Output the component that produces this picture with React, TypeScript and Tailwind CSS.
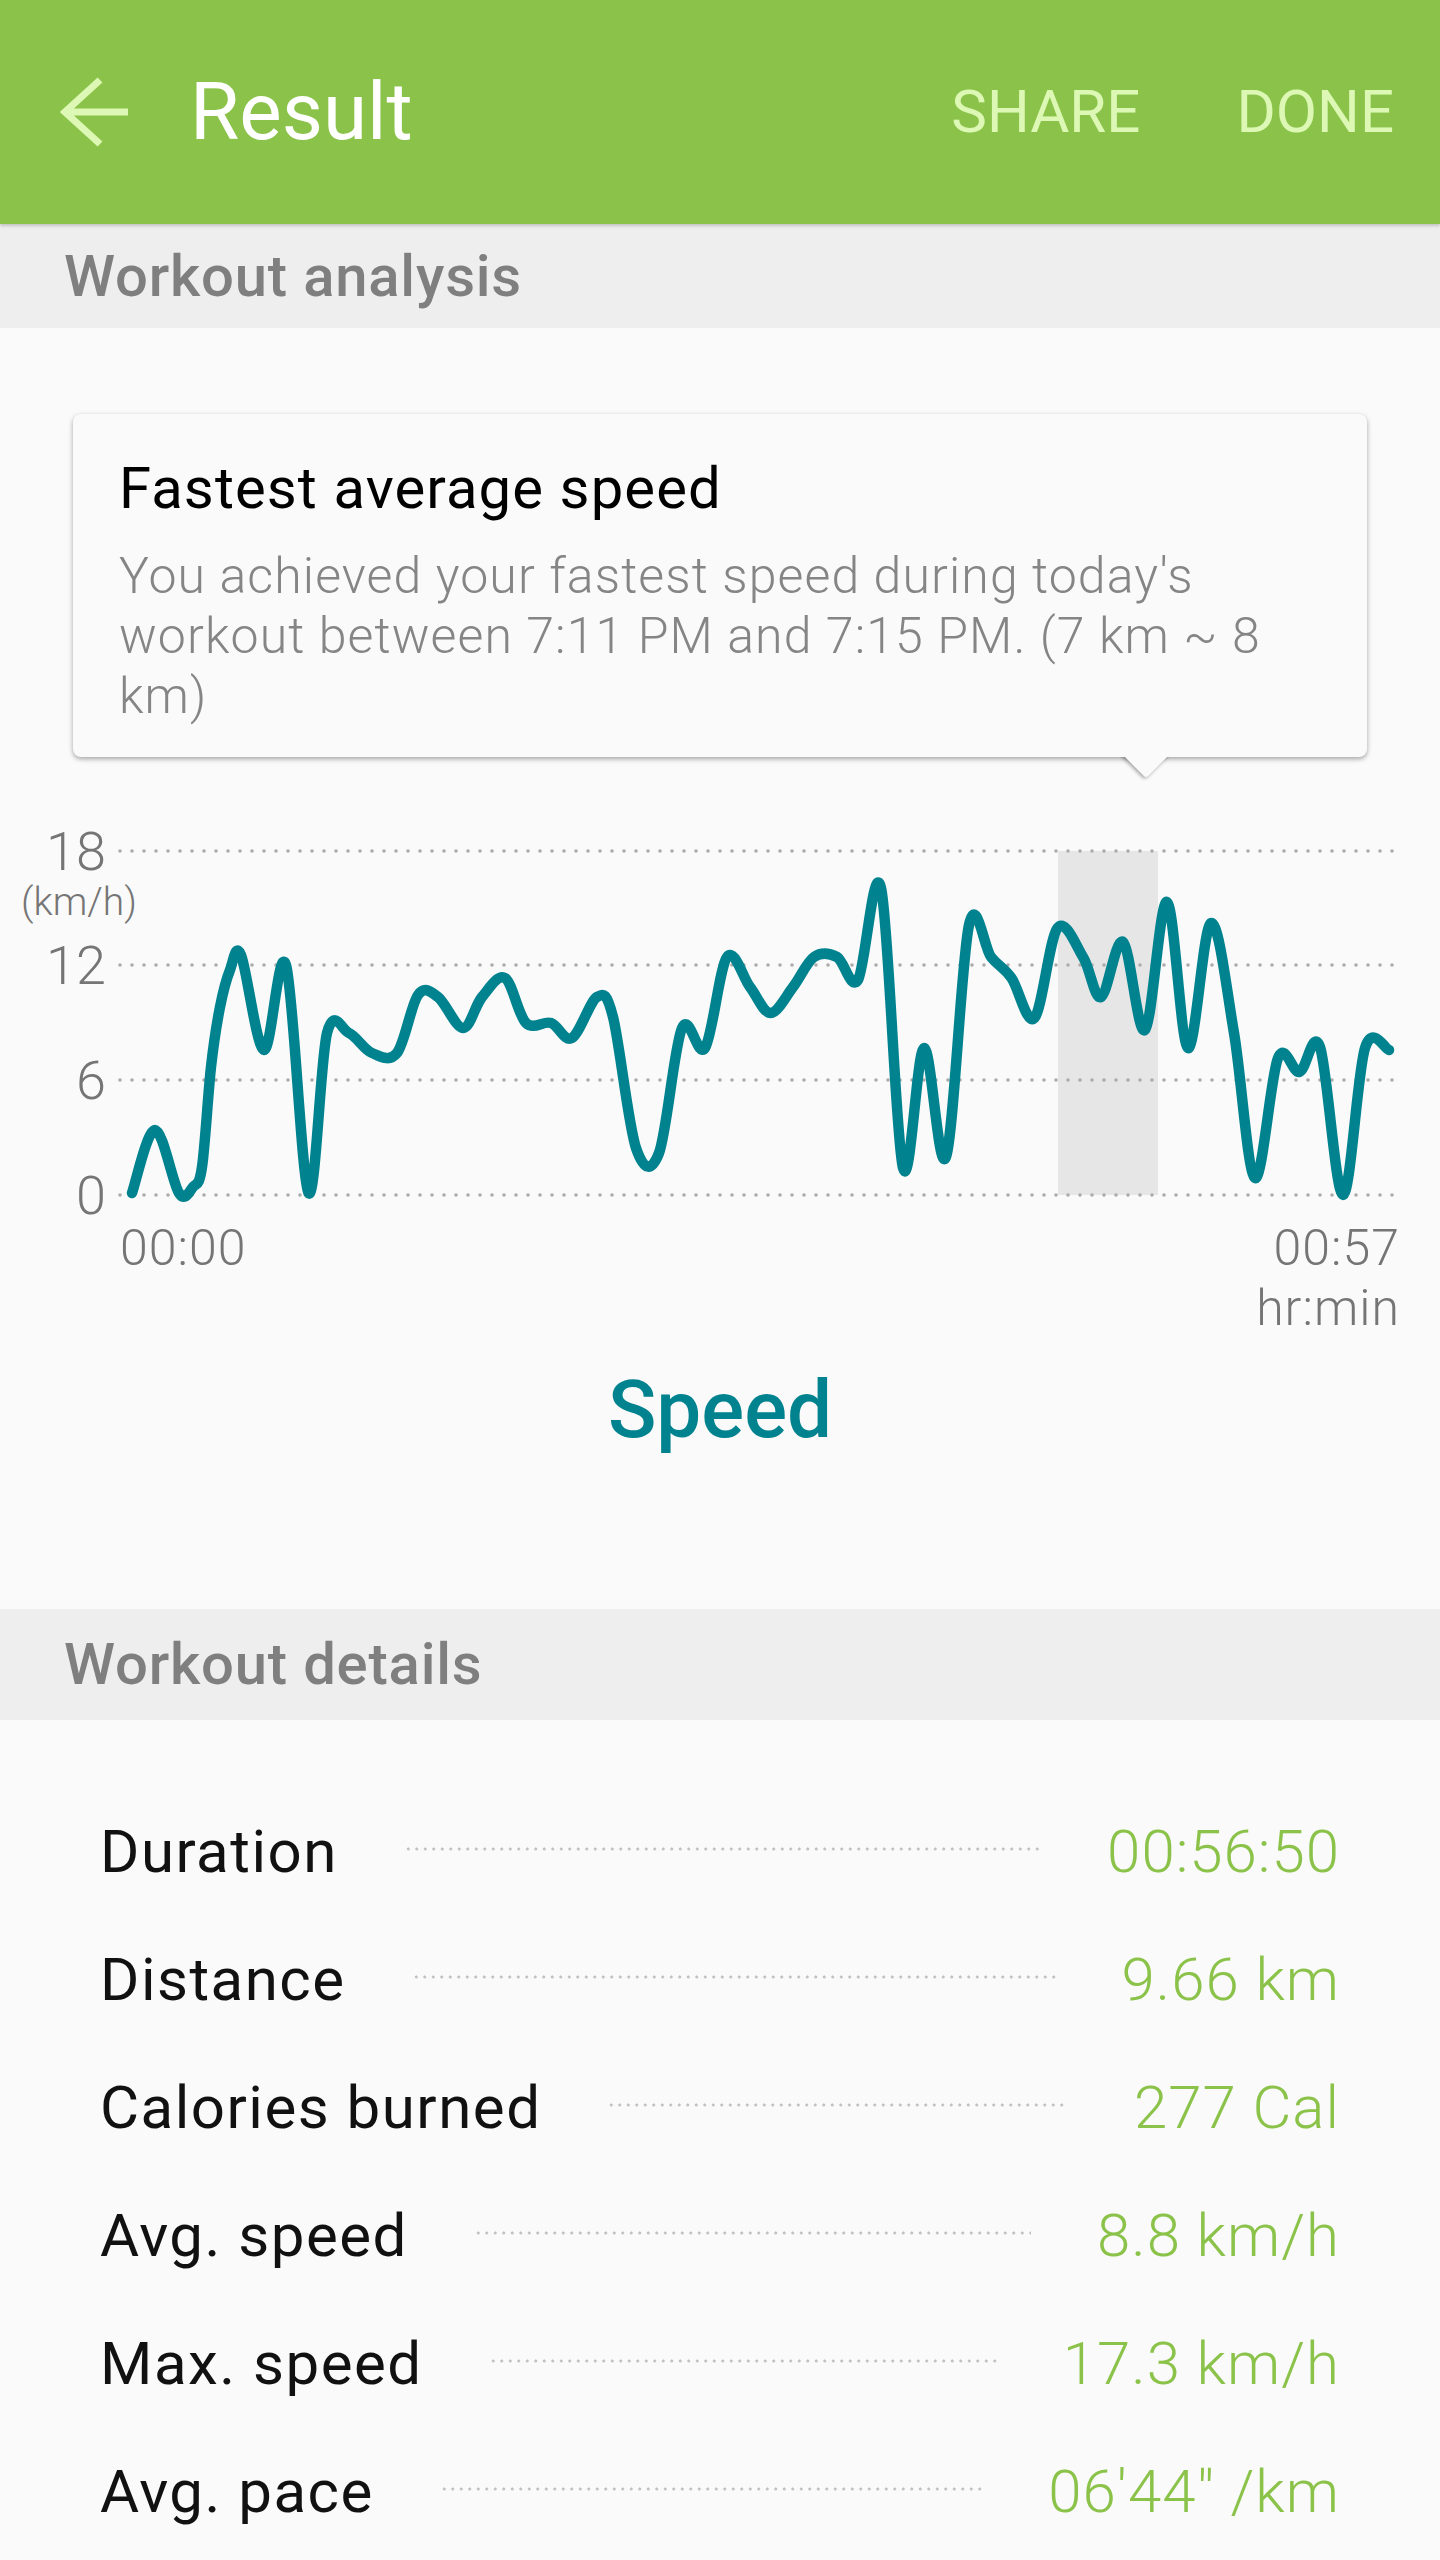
import { Fragment } from "react";

// traced speed samples, svg coords (x px, y px from chart top)
const samples: [number, number][] = [
  [132, 393], [155, 330], [179, 393], [193, 387], [202, 367], [211, 267], [220, 207], [230, 170],
  [241, 155], [264, 250], [286, 165], [308.5, 393], [327, 233], [349, 233], [372, 253], [397, 253],
  [418, 195], [438, 197], [463, 228], [482, 197], [505, 178], [526, 223], [551, 223], [572, 238],
  [597, 197], [613, 217], [636, 348], [659, 353], [682, 228], [705, 248], [727, 157], [750, 187],
  [770.5, 213], [793, 187], [814, 157], [837, 157], [858, 180], [881, 88], [903, 368], [924, 248],
  [946, 357], [969, 125], [991, 157], [1011.5, 178], [1034.5, 218], [1057.5, 128], [1083, 157],
  [1101, 197], [1123, 142], [1145, 230], [1167, 102], [1188, 248], [1211, 123], [1234, 233],
  [1255, 378], [1278, 258], [1299.5, 272], [1320, 247], [1343, 395], [1365, 248], [1389, 250],
];

const toSmoothPath = (p: [number, number][]) => {
  let d = `M${p[0][0]},${p[0][1]}`;
  for (let i = 0; i < p.length - 1; i++) {
    const p0 = p[i - 1] ?? p[i];
    const p1 = p[i];
    const p2 = p[i + 1];
    const p3 = p[i + 2] ?? p2;
    const c1x = p1[0] + (p2[0] - p0[0]) / 6;
    const c1y = p1[1] + (p2[1] - p0[1]) / 6;
    const c2x = p2[0] - (p3[0] - p1[0]) / 6;
    const c2y = p2[1] - (p3[1] - p1[1]) / 6;
    d += ` C${c1x.toFixed(1)},${c1y.toFixed(1)} ${c2x.toFixed(1)},${c2y.toFixed(1)} ${p2[0]},${p2[1]}`;
  }
  return d;
};

const gridRows = [
  { label: "18", y: 51 },
  { label: "12", y: 165 },
  { label: "6", y: 280 },
  { label: "0", y: 395 },
];

const details = [
  { name: "Duration", value: "00:56:50" },
  { name: "Distance", value: "9.66 km" },
  { name: "Calories burned", value: "277 Cal" },
  { name: "Avg. speed", value: "8.8 km/h" },
  { name: "Max. speed", value: "17.3 km/h" },
  { name: "Avg. pace", value: "06'44\" /km" },
];

const SpeedChart = () => (
  <svg className="mt-[43px] block w-full overflow-visible" viewBox="0 0 1440 418" height="418">
    <rect x="1058" y="51" width="100" height="344" fill="#e6e6e6" />
    {gridRows.map((g) => (
      <Fragment key={g.label}>
        <line
          x1="120"
          x2="1396"
          y1={g.y}
          y2={g.y}
          stroke="#ababab"
          strokeWidth="3.6"
          strokeDasharray="0 12"
          strokeLinecap="round"
        />
        <text x="106" y={g.y + 19} textAnchor="end" className="fill-[#757575] text-[54px] font-light">
          {g.label}
        </text>
      </Fragment>
    ))}
    <text x="79" y="115" textAnchor="middle" className="fill-[#757575] text-[39px] font-light">
      (km/h)
    </text>
    <path
      d={toSmoothPath(samples)}
      fill="none"
      stroke="#00838f"
      strokeWidth="10.5"
      strokeLinecap="round"
      strokeLinejoin="round"
    />
  </svg>
);

export default function App() {
  return (
    <div className="min-h-screen w-full bg-[#fafafa] font-[Roboto,sans-serif]">
      <header className="relative z-10 flex h-[224px] items-center bg-[#8bc34a] shadow-[0_2px_3px_rgba(0,0,0,0.18)]">
        <svg className="ml-[60px] shrink-0" width="70" height="70" viewBox="0 0 70 70" fill="none">
          <path d="M5 35H68M40 3L5 35L40 67" stroke="#ddf8b5" strokeWidth="7" />
        </svg>
        <h1 className="ml-[60px] text-[80px] leading-none text-white">Result</h1>
        <div className="ml-auto flex items-center gap-[96px] pr-[46px] text-[60px] leading-none text-[#ddf8b5]">
          <span>SHARE</span>
          <span>DONE</span>
        </div>
      </header>

      <div className="flex h-[104px] items-center bg-[#eeeeee] pl-[64px]">
        <h2 className="text-[58px] font-medium tracking-[0.8px] text-[#7f7f7f]">Workout analysis</h2>
      </div>

      <div className="relative mx-[73px] mt-[86px] rounded-[8px] bg-[#fafafa] pt-[40px] pr-[40px] pb-[31px] pl-[46px] shadow-[0_2px_5px_rgba(0,0,0,0.35)]">
        <p className="text-[58px] leading-[68px] tracking-[1.1px] text-black">Fastest average speed</p>
        <p className="mt-[24px] text-[50px] leading-[60px] font-light tracking-[1.1px] text-[#858585]">
          You achieved your fastest speed during today's
          <br />
          workout between 7:11 PM and 7:15 PM. (7 km ~ 8
          <br />
          km)
        </p>
        <div className="absolute top-full left-[1043px] h-[28px] w-[60px] overflow-hidden">
          <div className="mx-auto -mt-[20px] h-[34px] w-[34px] rotate-45 rounded-[3px] bg-[#fafafa] shadow-[0_2px_4px_rgba(0,0,0,0.35)]" />
        </div>
      </div>

      <SpeedChart />

      <div className="flex items-start justify-between pr-[40px] pl-[120px] text-[50px] leading-[60px] font-light tracking-[1px] text-[#757575]">
        <span>00:00</span>
        <div className="text-right">
          <div>00:57</div>
          <div>hr:min</div>
        </div>
      </div>

      <h2 className="mt-[32px] text-center text-[80px] leading-none font-medium text-[#00838f]">Speed</h2>

      <div className="mt-[159px] flex h-[111px] items-center bg-[#eeeeee] pl-[64px]">
        <h2 className="text-[58px] font-medium tracking-[0.8px] text-[#7f7f7f]">Workout details</h2>
      </div>

      <div className="pt-[68px] pr-[100px] pl-[100px]">
        {details.map((row) => (
          <div key={row.name} className="flex h-[128px] items-center text-[60px]">
            <span className="tracking-[1.5px] text-[#111111]">{row.name}</span>
            <span className="mx-[66px] h-[4px] flex-1 -translate-y-[3px] bg-[radial-gradient(circle,#c2c2c2_1.4px,transparent_1.8px)] bg-[length:8.5px_4px] bg-repeat-x" />
            <span className="font-light tracking-[1px] text-[#8bc34a]">{row.value}</span>
          </div>
        ))}
      </div>
    </div>
  );
}
